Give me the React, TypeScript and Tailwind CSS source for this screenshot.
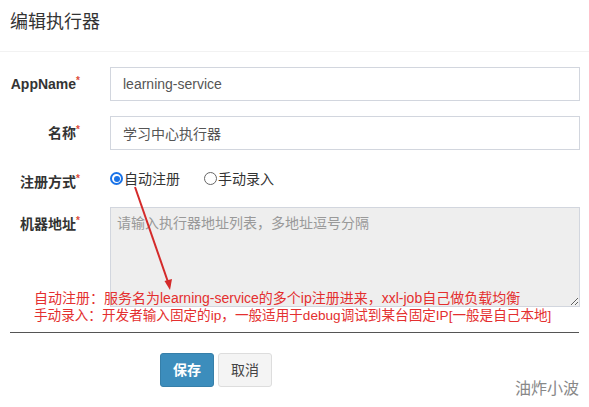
import React from 'react';

const font = { fontFamily: '"Liberation Sans", "Noto Sans CJK SC", sans-serif' };

function Label({ text, top = false }: { text: string; top?: boolean }) {
  return (
    <div
      className={`w-[80px] shrink-0 text-right text-[14px] font-bold text-[#333] leading-[20px] ${
        top ? 'pt-[7px]' : 'self-center'
      }`}
    >
      {text}
      <span className="text-[#dd4b39] text-[10px] align-top leading-[14px]">*</span>
    </div>
  );
}

function Radio({ checked, label }: { checked: boolean; label: string }) {
  return (
    <label className="flex items-center text-[14px] text-[#333] leading-[22px]">
      {checked ? (
        <span className="w-[13px] h-[13px] rounded-full border-2 border-[#1a73e8] flex items-center justify-center">
          <span className="w-[6px] h-[6px] rounded-full bg-[#1a73e8]" />
        </span>
      ) : (
        <span className="w-[13px] h-[13px] rounded-full border border-[#666] bg-white" />
      )}
      <span className="ml-[1px]">{label}</span>
    </label>
  );
}

export default function App() {
  return (
    <div className="relative w-[589px] h-[407px] bg-white overflow-hidden" style={font}>
      <div className="h-[52px] border-b border-[#f2f2f2] px-[10px] pt-[10px]">
        <h4 className="text-[18px] leading-[24px] text-[#333]">编辑执行器</h4>
      </div>

      <div className="pt-[15px] pr-[9px]">
        <div className="flex h-[34px]">
          <Label text="AppName" />
          <input
            defaultValue="learning-service"
            className="ml-[30px] flex-1 h-[34px] border border-[#d2d6de] px-[12px] text-[14px] text-[#555] outline-none"
          />
        </div>

        <div className="flex h-[34px] mt-[15px]">
          <Label text="名称" />
          <input
            defaultValue="学习中心执行器"
            className="ml-[30px] flex-1 h-[34px] border border-[#d2d6de] px-[12px] text-[14px] text-[#555] outline-none"
          />
        </div>

        <div className="flex h-[27px] mt-[15px]">
          <Label text="注册方式" top />
          <div className="ml-[30px] flex gap-[24px]">
            <Radio checked label="自动注册" />
            <Radio checked={false} label="手动录入" />
          </div>
        </div>

        <div className="flex mt-[15px]">
          <Label text="机器地址" top />
          <textarea
            disabled
            placeholder="请输入执行器地址列表，多地址逗号分隔"
            className="ml-[30px] flex-1 h-[100px] border border-[#d2d6de] bg-[#eeeeee] px-[6px] py-[5px] text-[14px] leading-[20px] text-[#555] placeholder:text-[#999] resize-y"
          />
        </div>
      </div>

      <div className="mt-[25px] mx-[10px] border-t border-[#555] pt-[20px] pl-[150px] flex gap-[4px]">
        <button className="w-[54px] h-[34px] rounded-[3px] bg-[#3c8dbc] border border-[#367fa9] text-white text-[14px] font-bold">
          保存
        </button>
        <button className="w-[54px] h-[34px] rounded-[3px] bg-[#f4f4f4] border border-[#ddd] text-[#444] text-[14px]">
          取消
        </button>
      </div>

      {/* annotation overlay */}
      <div className="absolute left-[34px] top-[289px] text-[14px] leading-[18px] text-[#e42f2f] whitespace-nowrap">
        <div>自动注册：服务名为learning-service的多个ip注册进来，xxl-job自己做负载均衡</div>
        <div className="text-[13.6px]">手动录入：开发者输入固定的ip，一般适用于debug调试到某台固定IP[一般是自己本地]</div>
      </div>
      <svg className="absolute left-0 top-0 pointer-events-none" width="589" height="407">
        <line x1="135" y1="187" x2="168" y2="282" stroke="#d42a2a" strokeWidth="2" />
        <polygon points="170,290 164.5,281 172,279" fill="#d42a2a" />
      </svg>

      <div className="absolute right-[10px] bottom-[8px] text-[16px] leading-[20px] text-[#888]">油炸小波</div>
    </div>
  );
}
